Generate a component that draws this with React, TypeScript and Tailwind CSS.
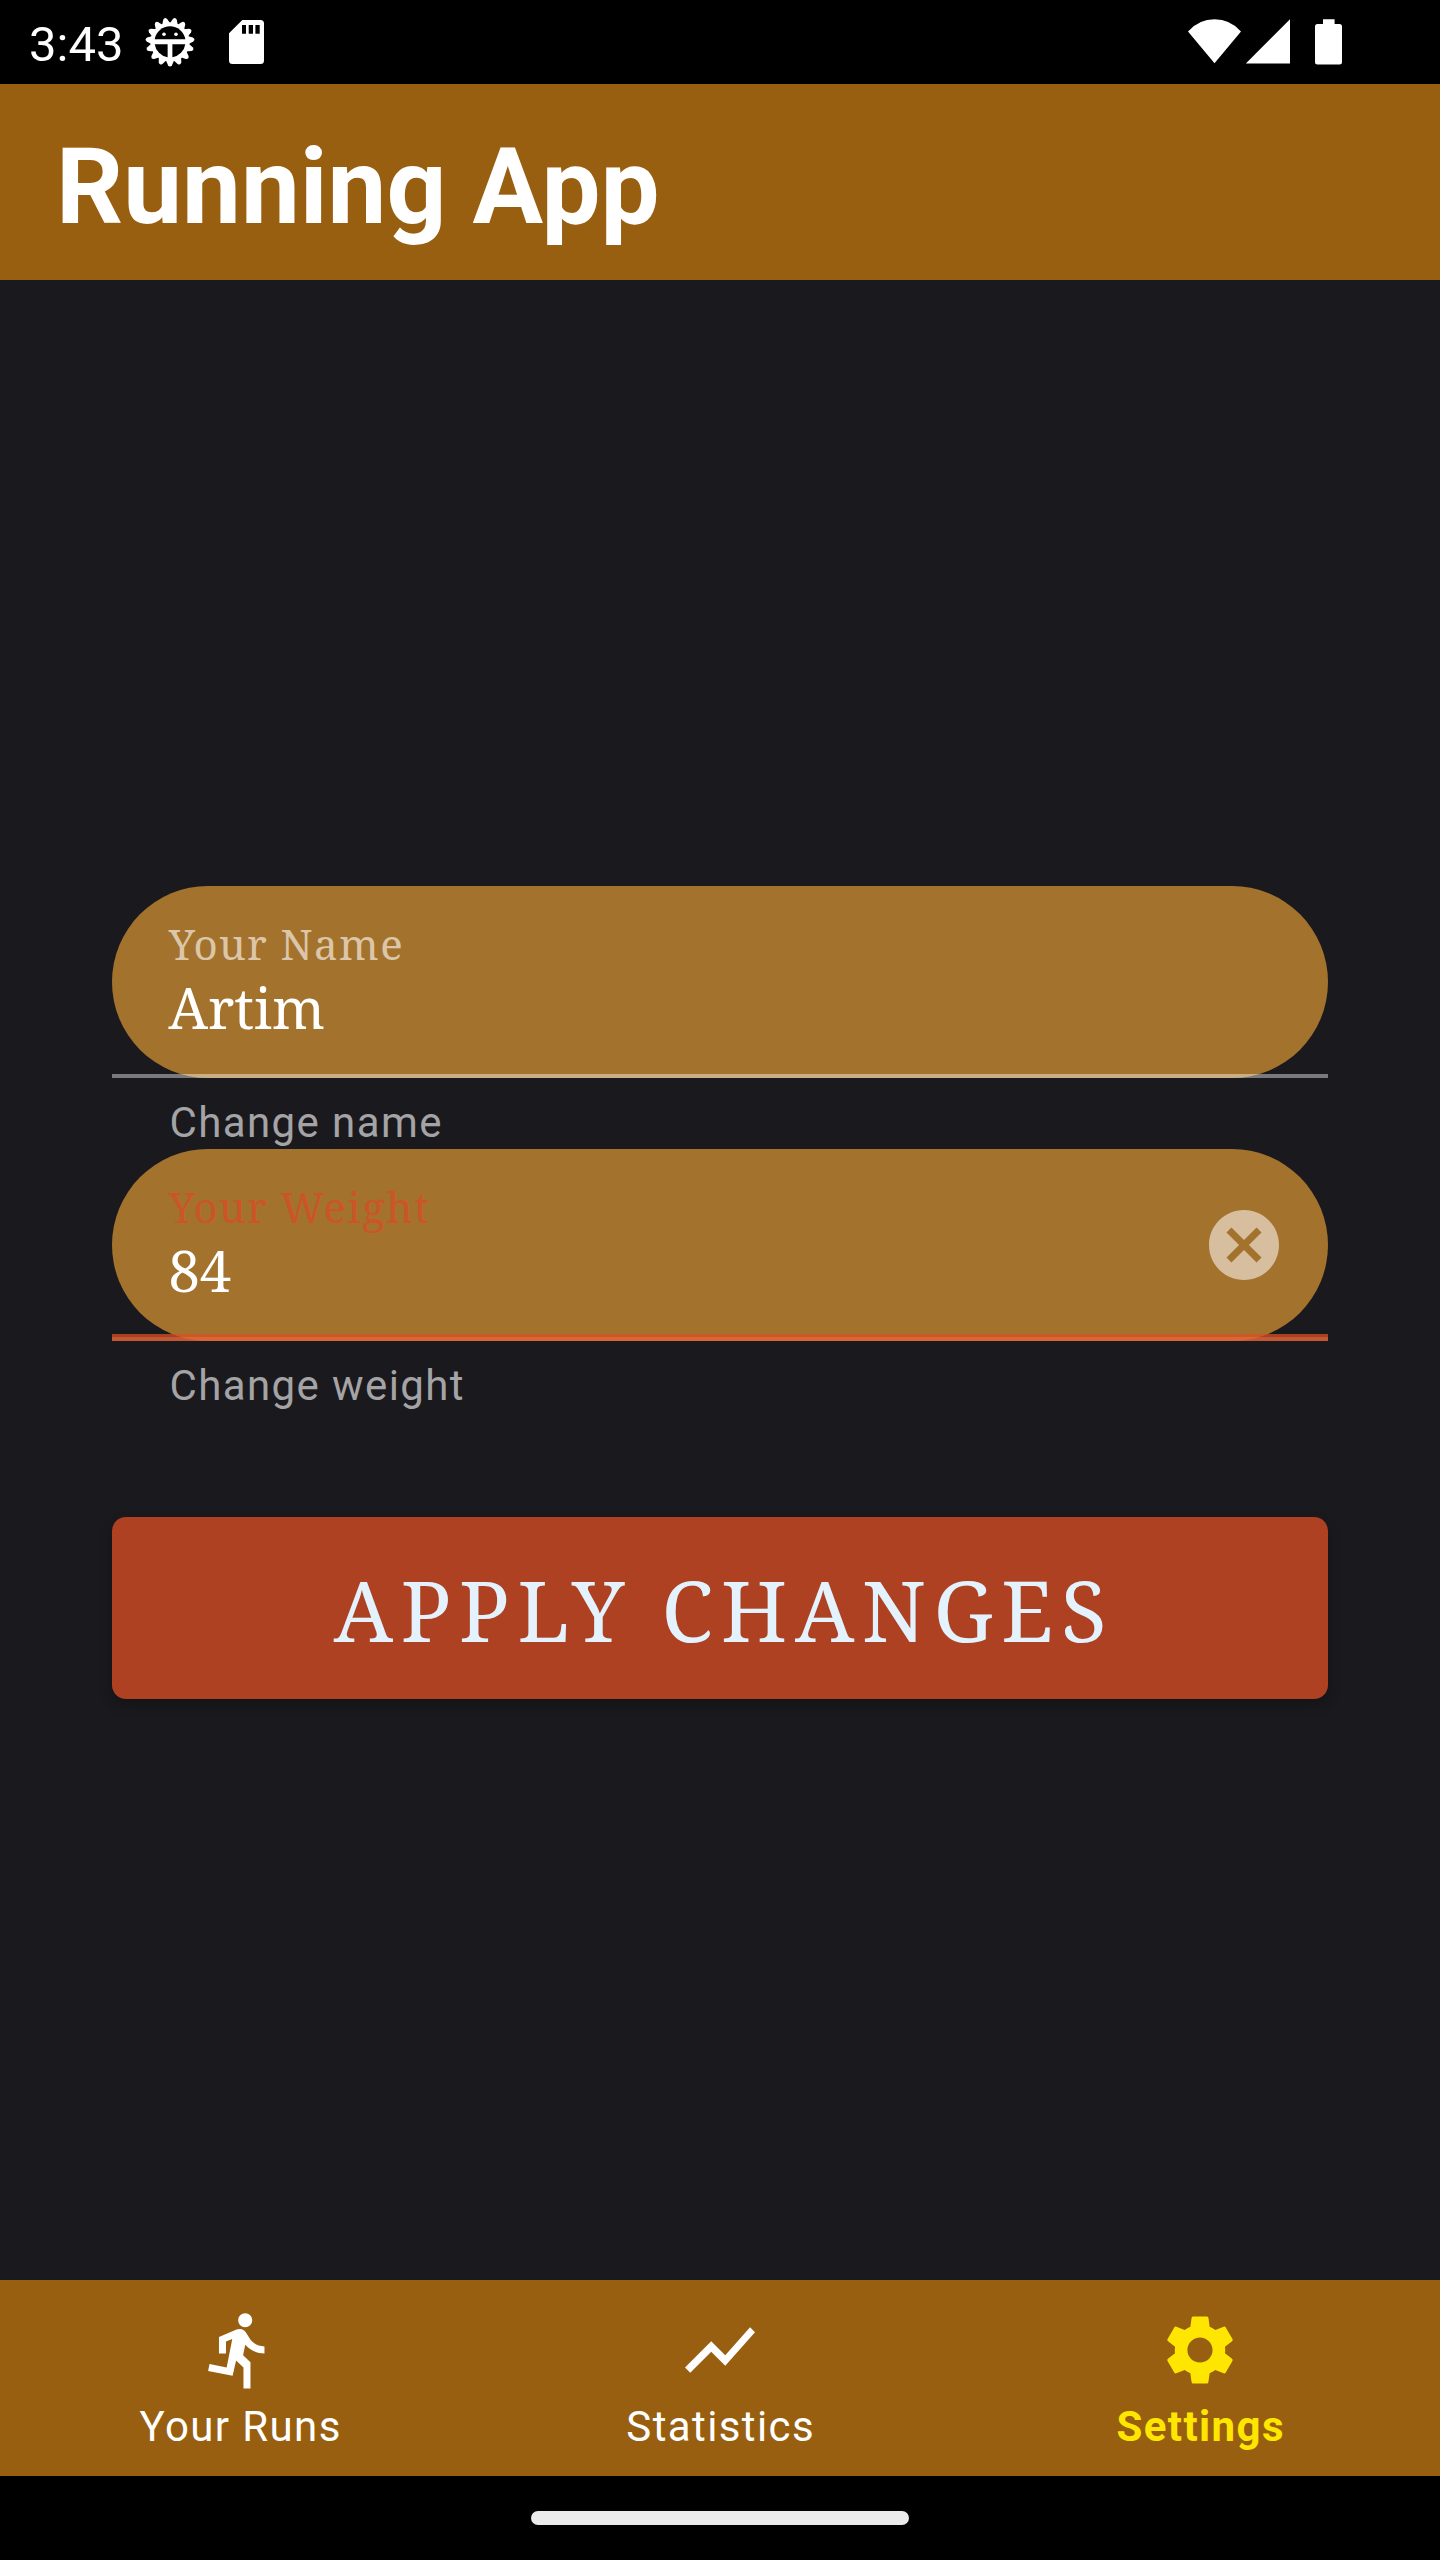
import React from "react";

const SERIF = "font-['Noto_Serif','Droid_Serif','DejaVu_Serif_Condensed','DejaVu_Serif',serif]";

const RUN =
  "M13.49 5.48c1.1 0 2-.9 2-2s-.9-2-2-2-2 .9-2 2 .9 2 2 2zm-3.6 13.9l1-4.4 2.1 2v6h2v-7.5l-2.1-2 .6-3c1.3 1.5 3.3 2.5 5.5 2.5v-2c-1.9 0-3.5-1-4.3-2.4l-1-1.6c-.4-.6-1-1-1.7-1-.3 0-.5.1-.8.1l-5.2 2.2v4.7h2v-3.4l1.8-.7-1.6 8.1-4.9-1-.4 2 7 1.4z";
const CHART = "M3.5 18.49l6-6.01 4 4L22 6.92l-1.41-1.41-7.09 7.97-4-4L2 16.99z";
const GEAR =
  "M19.14,12.94c0.04-0.3,0.06-0.61,0.06-0.94c0-0.32-0.02-0.64-0.07-0.94l2.03-1.58c0.18-0.14,0.23-0.41,0.12-0.61l-1.92-3.32c-0.12-0.22-0.37-0.29-0.59-0.22l-2.39,0.96c-0.5-0.38-1.03-0.7-1.62-0.94L14.4,2.81c-0.04-0.24-0.24-0.41-0.48-0.41h-3.84c-0.24,0-0.43,0.17-0.47,0.41L9.25,5.35C8.66,5.59,8.12,5.92,7.63,6.29L5.24,5.33c-0.22-0.08-0.47,0-0.59,0.22L2.74,8.87C2.62,9.08,2.66,9.34,2.86,9.48l2.03,1.58C4.84,11.36,4.8,11.69,4.8,12s0.02,0.64,0.07,0.94l-2.03,1.58c-0.18,0.14-0.23,0.41-0.12,0.61l1.92,3.32c0.12,0.22,0.37,0.29,0.59,0.22l2.39-0.96c0.5,0.38,1.03,0.7,1.62,0.94l0.36,2.54c0.05,0.24,0.24,0.41,0.48,0.41h3.84c0.24,0,0.44-0.17,0.47-0.41l0.36-2.54c0.59-0.24,1.13-0.56,1.62-0.94l2.39,0.96c0.22,0.08,0.47,0,0.59-0.22l1.92-3.32c0.12-0.22,0.07-0.47-0.12-0.61L19.14,12.94z M12,15.6c-1.98,0-3.6-1.62-3.6-3.6s1.62-3.6,3.6-3.6s3.6,1.62,3.6,3.6S13.98,15.6,12,15.6z";
const CANCEL =
  "M12 2C6.47 2 2 6.47 2 12s4.47 10 10 10 10-4.47 10-10S17.53 2 12 2zm5 13.59L15.59 17 12 13.41 8.41 17 7 15.59 10.59 12 7 8.41 8.41 7 12 10.59 15.59 7 17 8.41 13.41 12 17 15.59z";

function Icon({ d, className }: { d: string; className?: string }) {
  return (
    <svg viewBox="0 0 24 24" fill="currentColor" className={`size-[84px] ${className ?? ""}`}>
      <path d={d} />
    </svg>
  );
}

// Fifteen teeth, one of them pointing straight down.
const teeth = Array.from({ length: 15 }, (_, i) => i * 24);

function BugIcon() {
  return (
    <svg viewBox="-25 -25 50 50" className="ml-[22.5px] size-[50px]">
      {teeth.map((a) => (
        <path
          key={a}
          d="M-4.2 18L-2 23.2Q0 25.8 2 23.2L4.2 18z"
          fill="#fff"
          transform={`rotate(${a})`}
        />
      ))}
      <circle r="19.5" fill="#fff" />
      <path d="M-15.3 -2.7A15.5 15.5 0 0 1 15.3 -2.7z" fill="#000" />
      <path d="M-15.3 2.2H-2.4V15.3A15.5 15.5 0 0 1 -15.3 2.2z" fill="#000" />
      <path d="M15.3 2.2H2.4V15.3A15.5 15.5 0 0 0 15.3 2.2z" fill="#000" />
      <circle cx="-6" cy="-7.7" r="1.8" fill="#fff" />
      <circle cx="6" cy="-7.7" r="1.8" fill="#fff" />
    </svg>
  );
}

function StatusBar() {
  return (
    <div className="flex h-[84px] shrink-0 items-center bg-black pl-[29px] text-white">
      <span className="w-[93px] pt-[5px] text-[49px] leading-[58px]">3:43</span>
      <BugIcon />
      <svg viewBox="0 0 35 44" className="ml-[34.5px] h-[44px] w-[35px]">
        <path
          fillRule="evenodd"
          fill="#fff"
          d="M13.3 0H31.5Q35 0 35 3.5V40.5Q35 44 31.5 44H3.5Q0 44 0 40.5V13.3zM13 5V13.7H17V5zM19.7 5V13.7H24V5zM26.4 5V13.7H30.7V5z"
        />
      </svg>
      <svg viewBox="0 0 154 46" className="mr-[98px] ml-auto h-[46px] w-[154px]" fill="#fff">
        <path d="M0 12.4Q11 0.3 26.5 0.3T53 12.4L26.5 44.3z" />
        <path d="M102 0.3V44.5H57.8z" />
        <path d="M127 5H135V0.3H146.6V5H151.5Q154 5 154 7.5V43Q154 45.5 151.5 45.5H129.5Q127 45.5 127 43V7.5Q127 5 129.5 5z" />
      </svg>
    </div>
  );
}

function Field(props: { label: string; value: string; helper: string; focused?: boolean }) {
  const { label, value, helper, focused } = props;
  return (
    <div className="h-[263px]">
      <div className="relative h-[192px]">
        <div className={`flex h-full items-center rounded-full bg-[#a3732e] pl-[56px] ${SERIF}`}>
          <div className="flex-1">
            <div
              className={`mt-[-4px] pl-[0.7px] text-[42px] leading-[57px] tracking-[1.4px] ${focused ? "text-[#cb5527]" : "text-[#dcc6a9]"}`}
            >
              {label}
            </div>
            <div className="mt-[-3px] pl-[0.5px] text-[56px] leading-[76px] text-white">
              {value}
            </div>
          </div>
          {focused && <Icon d={CANCEL} className="mr-[42px] text-[#d6be9f]" />}
        </div>
        {focused ? (
          <div className="absolute inset-x-0 bottom-0">
            <div className="h-[3px] bg-[#d95022]/75" />
            <div className="h-[4px] bg-[#e26439]/85" />
          </div>
        ) : (
          <div className="absolute inset-x-0 bottom-0 h-[4px] bg-white/42" />
        )}
      </div>
      <div className="pt-[20px] pl-[57.5px] text-[42px] leading-[50px] tracking-[1.4px] text-[#a4a3a5]">
        {helper}
      </div>
    </div>
  );
}

function NavItem({ d, label, active }: { d: string; label: string; active?: boolean }) {
  return (
    <div
      className={`flex flex-1 flex-col items-center pt-[28px] ${active ? "font-bold text-[#ffe600]" : "text-white"}`}
    >
      <Icon d={d} />
      <span className="mt-[10px] pl-[1.4px] text-[42px] leading-[50px] tracking-[1.4px]">
        {label}
      </span>
    </div>
  );
}

export default function App() {
  return (
    <div className="flex h-[2560px] w-[1440px] flex-col overflow-hidden bg-[#1a191d] font-[Roboto,sans-serif]">
      <StatusBar />
      <header className="flex h-[196px] shrink-0 items-center bg-[#985f10] pl-[56px]">
        <h1 className="pt-[12px] text-[105px] leading-[124px] font-bold text-white">Running App</h1>
      </header>
      <main className="flex-1 px-[112px] pt-[606px]">
        <Field label="Your Name" value="Artim" helper="Change name" />
        <Field label="Your Weight" value="84" helper="Change weight" focused />
        <button
          className={`mt-[105px] flex h-[182px] w-full items-center justify-center rounded-[14px] bg-[#ad4121] pt-[4px] pl-[8px] text-[84px] tracking-[7.6px] text-[#e3f2fd] shadow-[0_6px_12px_rgba(0,0,0,0.25)] ${SERIF}`}
        >
          APPLY CHANGES
        </button>
      </main>
      <nav className="flex h-[196px] shrink-0 bg-[#985f10]">
        <NavItem d={RUN} label="Your Runs" />
        <NavItem d={CHART} label="Statistics" />
        <NavItem d={GEAR} label="Settings" active />
      </nav>
      <div className="flex h-[84px] shrink-0 items-center justify-center bg-black">
        <div className="h-[14px] w-[378px] rounded-full bg-[#ebebeb]" />
      </div>
    </div>
  );
}
